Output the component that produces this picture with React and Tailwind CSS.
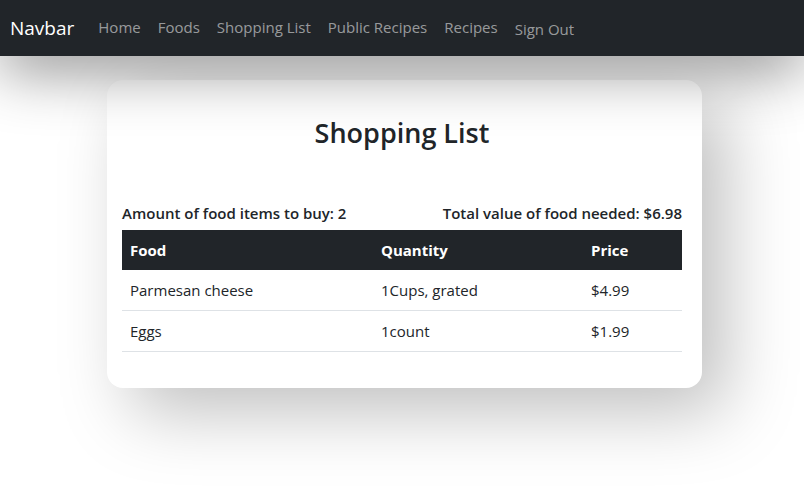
export default function App() {
  const font = { fontFamily: '"Open Sans", "Noto Sans", sans-serif' };
  const links = ["Home", "Foods", "Shopping List", "Public Recipes", "Recipes"];
  return (
    <div className="min-h-[492px] bg-white text-[#212529] overflow-hidden" style={font}>
      <nav className="relative z-10 h-[56px] bg-[#212529] flex items-center pl-[10px] shadow-[0_14px_60px_rgba(0,0,0,0.45)]">
        <span className="text-[19px] text-white mr-[24px]">Navbar</span>
        <div className="flex gap-[17px]">
          {links.map((l) => (
            <span key={l} className="text-[15px] text-[rgba(255,255,255,0.55)]">{l}</span>
          ))}
          <span className="text-[15px] text-[rgba(255,255,255,0.55)] mt-[2px]">Sign Out</span>
        </div>
      </nav>
      <div className="pt-[24px] pb-[100px]">
        <div className="w-[595px] ml-[107px] bg-white rounded-[16px] shadow-[24px_24px_70px_rgba(0,0,0,0.25)] pl-[15px] pr-[20px] pt-[37px] pb-[36px]">
          <h2 className="text-center text-[27px] font-semibold leading-[1.2]">Shopping List</h2>
          <div className="mt-[53px] flex justify-between text-[15px] font-semibold">
            <span>Amount of food items to buy: 2</span>
            <span>Total value of food needed: $6.98</span>
          </div>
          <table className="mt-[5px] w-full text-[15px] border-collapse">
            <colgroup>
              <col className="w-[251px]" />
              <col className="w-[210px]" />
              <col />
            </colgroup>
            <thead>
              <tr className="bg-[#212529] text-white h-[40px]">
                <th className="text-left font-bold px-[8px]">Food</th>
                <th className="text-left font-bold px-[8px]">Quantity</th>
                <th className="text-left font-bold px-[8px]">Price</th>
              </tr>
            </thead>
            <tbody>
              <tr className="h-[41px] border-b border-[#dee2e6]">
                <td className="px-[8px]">Parmesan cheese</td>
                <td className="px-[8px]">1Cups, grated</td>
                <td className="px-[8px]">$4.99</td>
              </tr>
              <tr className="h-[41px] border-b border-[#dee2e6]">
                <td className="px-[8px]">Eggs</td>
                <td className="px-[8px]">1count</td>
                <td className="px-[8px]">$1.99</td>
              </tr>
            </tbody>
          </table>
        </div>
      </div>
    </div>
  );
}
